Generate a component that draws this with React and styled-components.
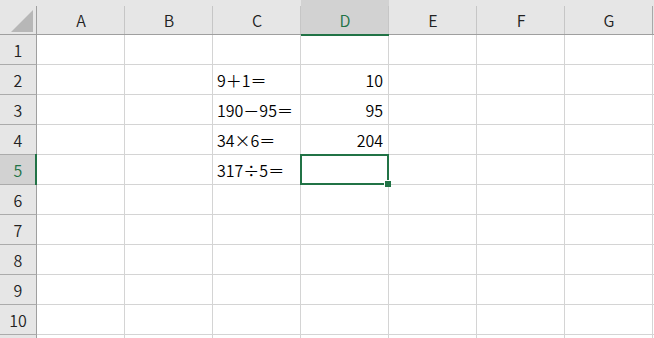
import styled, { createGlobalStyle } from "styled-components";

const GlobalStyle = createGlobalStyle`
  html, body {
    margin: 0;
    padding: 0;
    background: #ffffff;
    overflow: hidden;
  }
  body {
    font-family: "Noto Sans CJK JP", "Noto Sans", sans-serif;
  }
`;

const GREEN = "#217346";
const COLS = ["A", "B", "C", "D", "E", "F", "G"];
const ROWS = [1, 2, 3, 4, 5, 6, 7, 8, 9, 10];

const data = {
  C2: "9＋1＝",
  D2: "10",
  C3: "190－95＝",
  D3: "95",
  C4: "34×6＝",
  D4: "204",
  C5: "317÷5＝",
};

const Sheet = styled.div`
  display: grid;
  grid-template-columns: 37px repeat(7, 88px) 1fr;
  grid-template-rows: 35px;
  grid-auto-rows: 30px;
  width: 654px;
  height: 338px;
  overflow: hidden;
  font-size: 16px;
  font-weight: 350;
  color: #000;
`;

const Corner = styled.div`
  position: relative;
  background: #e6e6e6;
  border-bottom: 1px solid #9f9f9f;
  box-sizing: border-box;

  &::before {
    content: "";
    position: absolute;
    left: 11px;
    top: 10px;
    width: 22px;
    height: 22px;
    background: #b7b7b7;
    clip-path: polygon(100% 0, 100% 100%, 0 100%);
  }

  &::after {
    content: "";
    position: absolute;
    top: 6px;
    bottom: 0;
    right: 0;
    width: 1px;
    background: #9f9f9f;
  }
`;

const ColHeader = styled.div`
  position: relative;
  display: flex;
  align-items: center;
  justify-content: center;
  padding-top: 6px;
  box-sizing: border-box;
  background: ${({ $active }) => ($active ? "#d2d2d2" : "#e6e6e6")};
  border-bottom: ${({ $active }) => ($active ? `2px solid ${GREEN}` : "1px solid #9f9f9f")};
  color: ${({ $active }) => ($active ? GREEN : "#222")};
  margin-bottom: ${({ $active }) => ($active ? "-1px" : "0")};
  z-index: ${({ $active }) => ($active ? 1 : 0)};

  &::after {
    content: "";
    position: absolute;
    top: 6px;
    bottom: 0;
    right: 0;
    width: 1px;
    background: ${({ $last }) => ($last ? "#a8a8a8" : "#c6c6c6")};
  }
`;

const HeaderFill = styled.div`
  background: #e6e6e6;
  border-bottom: 1px solid #9f9f9f;
  box-sizing: border-box;
`;

const RowHeader = styled.div`
  position: relative;
  display: flex;
  align-items: center;
  justify-content: center;
  padding-top: 1px;
  box-sizing: border-box;
  background: ${({ $active }) => ($active ? "#d2d2d2" : "#e6e6e6")};
  color: ${({ $active }) => ($active ? GREEN : "#222")};
  border-bottom: 1px solid #ababab;
  border-right: 1px solid #9f9f9f;

  &::after {
    content: "";
    display: ${({ $active }) => ($active ? "block" : "none")};
    position: absolute;
    top: -1px;
    bottom: -1px;
    right: -1px;
    width: 2px;
    background: ${GREEN};
  }
`;

const Cell = styled.div`
  position: relative;
  display: flex;
  align-items: center;
  justify-content: ${({ $align }) => ($align === "right" ? "flex-end" : "flex-start")};
  padding: 1px 5px 0 4px;
  box-sizing: border-box;
  border-right: 1px solid #d4d4d4;
  border-bottom: 1px solid #d4d4d4;
  white-space: nowrap;
  z-index: ${({ $selected }) => ($selected ? 2 : 0)};
`;

const Selection = styled.div`
  position: absolute;
  left: -1px;
  top: -1px;
  right: -1px;
  bottom: -1px;
  border: 2px solid ${GREEN};
  pointer-events: none;
`;

const FillHandle = styled.div`
  position: absolute;
  right: -4px;
  bottom: -4px;
  width: 6px;
  height: 6px;
  background: ${GREEN};
  border: 1px solid #ffffff;
  border-right: none;
  border-bottom: none;
`;

const Tail = styled.div`
  border-bottom: 1px solid #d4d4d4;
  box-sizing: border-box;
`;

function Row({ r, label = r }) {
  return (
    <>
      <RowHeader $active={r === 5}>{label}</RowHeader>
      {COLS.map((c) => {
        const ref = c + r;
        const value = data[ref];
        const isNum = value !== undefined && /^\d+$/.test(value);
        const selected = ref === "D5";
        return (
          <Cell key={ref} $align={isNum ? "right" : "left"} $selected={selected}>
            {value}
            {selected && (
              <Selection>
                <FillHandle />
              </Selection>
            )}
          </Cell>
        );
      })}
      <Tail />
    </>
  );
}

export default function App() {
  return (
    <>
      <GlobalStyle />
      <Sheet>
        <Corner />
        {COLS.map((c, i) => (
          <ColHeader key={c} $active={c === "D"} $last={i === COLS.length - 1}>
            {c}
          </ColHeader>
        ))}
        <HeaderFill />
        {ROWS.map((r) => (
          <Row key={r} r={r} />
        ))}
        {/* row 11 only peeks in at the bottom edge */}
        <Row r={11} label="" />
      </Sheet>
    </>
  );
}
